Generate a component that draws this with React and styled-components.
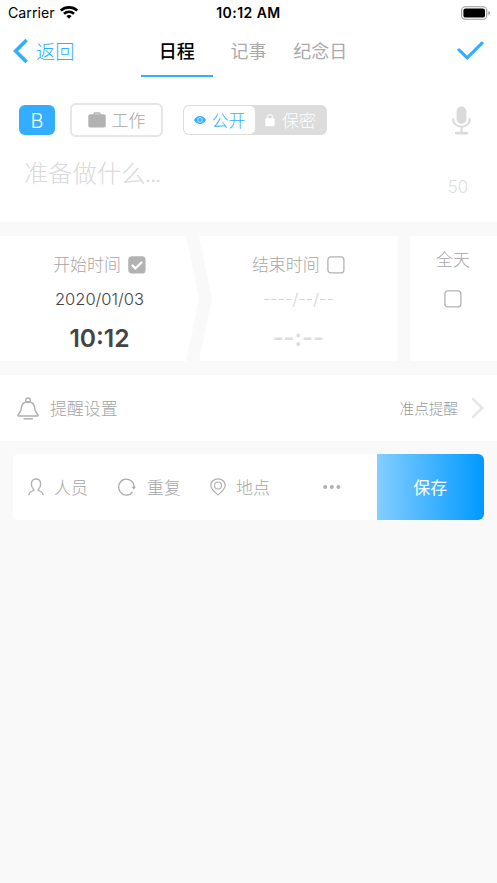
import React from 'react';
import styled, { createGlobalStyle } from 'styled-components';

const GlobalStyle = createGlobalStyle`
  * { box-sizing: border-box; }
  body { margin: 0; background: #f9f9f9; }
  button { border: 0; padding: 0; margin: 0; background: none; font: inherit; color: inherit; }
  svg { display: block; flex: none; }
`;

const Screen = styled.main`
  width: 497px;
  height: 883px;
  overflow: hidden;
  background: #f9f9f9;
  font-family: Inter, "Noto Sans CJK SC", sans-serif;
  font-weight: 300;
  font-size: 16.9px;
  color: #a6a6a6;
  white-space: nowrap;
`;

const StatusBar = styled.header`
  height: 25px;
  display: grid;
  grid-template-columns: 1fr auto 1fr;
  align-items: center;
  padding: 0 6px 0 8px;
  background: #fff;
  color: #000;
  font-size: 14.2px;
  line-height: 25px;
`;

const Carrier = styled.div`
  display: flex;
  align-items: center;
  gap: 5px;
  font-weight: 400;
`;

const Clock = styled.div`
  margin-right: 2px;
  font-size: 14px;
  font-weight: 600;
  letter-spacing: 0.45px;
`;

const Battery = styled.div`
  justify-self: end;
`;

const NavBar = styled.nav`
  height: 52px;
  display: flex;
  align-items: stretch;
  background: #fff;
`;

const Back = styled.button`
  width: 141px;
  display: flex;
  align-items: center;
  gap: 8px;
  padding: 0 0 1px 13px;
  font-size: 19.3px;
  color: #32adff;
`;

const Tab = styled.button`
  width: 71.7px;
  padding-top: 3px;
  border-bottom: 2px solid ${(p) => (p.$active ? '#32adff' : 'transparent')};
  font-size: 18px;
  line-height: 47px;
  font-weight: ${(p) => (p.$active ? 500 : 400)};
  color: ${(p) => (p.$active ? '#000' : '#aaa')};
`;

const Confirm = styled.button`
  margin-left: auto;
  padding: 0 13px 2px 0;
`;

const Compose = styled.section`
  height: 145px;
  padding: 26px 26px 0 19px;
  background: #fff;
`;

const OptionRow = styled.div`
  height: 34px;
  display: flex;
  align-items: center;
`;

const Badge = styled.div`
  width: 36px;
  height: 30px;
  border-radius: 6px;
  background: #32adff;
  color: #fff;
  font-size: 20px;
  line-height: 33px;
  text-align: center;
`;

const Category = styled.button`
  width: 93px;
  height: 34px;
  margin: 0 20px 0 15px;
  display: flex;
  align-items: center;
  justify-content: center;
  gap: 6px;
  border: 2px solid #e6e6e6;
  border-radius: 6px;
`;

const Segment = styled.div`
  width: 144px;
  height: 30px;
  padding: 1px;
  display: flex;
  border-radius: 6px;
  background: #dcdcdc;
`;

const SegmentItem = styled.button`
  width: 71px;
  display: flex;
  align-items: center;
  justify-content: center;
  gap: ${(p) => (p.$active ? 6 : 7)}px;
  border-radius: 5px;
  background: ${(p) => (p.$active ? '#fff' : 'transparent')};
  color: ${(p) => (p.$active ? '#32adff' : '#fff')};
`;

const OptionLabel = styled.span`
  padding-top: ${(p) => p.$drop || 1}px;
  line-height: 24px;
`;

const MicButton = styled.button`
  margin-left: auto;
`;

const Prompt = styled.div`
  height: 30px;
  margin: 20px 0 0 5px;
  padding-top: 1px;
  font-size: 24.3px;
  line-height: 30px;
  color: #dadada;
`;

const Ellipsis = styled.span`
  margin-left: -1px;
  letter-spacing: -1.7px;
`;

const Counter = styled.div`
  margin: -10px 3px 0 0;
  text-align: right;
  font-size: 16.7px;
  line-height: 20px;
  color: #ddd;
`;

const TimeSection = styled.section`
  height: 125px;
  margin: 14px 0;
  display: flex;
`;

const TimePanel = styled.div`
  width: ${(p) => (p.$arrow === 'out' ? 199 : 198.5)}px;
  padding-top: 16px;
  display: flex;
  flex-direction: column;
  align-items: center;
  background: #fff;
  clip-path: ${(p) =>
    p.$arrow === 'out'
      ? 'polygon(0 0, 186px 0, 100% 50%, 186px 100%, 0 100%)'
      : 'polygon(0 0, 100% 0, 100% 100%, 0 100%, 13px 50%)'};
`;

const TimeTitle = styled.div`
  height: 26px;
  display: flex;
  align-items: center;
  gap: 7px;
  line-height: 26px;
`;

const DateValue = styled.div`
  margin-top: 10px;
  font-size: 16.5px;
  line-height: 22px;
  color: ${(p) => (p.$empty ? '#d4d4d4' : '#444')};
`;

const HourValue = styled.div`
  margin-top: 11px;
  font-size: ${(p) => (p.$empty ? 23.5 : 24.6)}px;
  font-weight: 600;
  line-height: 34px;
  color: ${(p) => (p.$empty ? '#ddd' : '#444')};
`;

const AllDay = styled.div`
  width: 87px;
  margin-left: 12.5px;
  padding: 12px 1px 0 0;
  display: flex;
  flex-direction: column;
  align-items: center;
  gap: 18px;
  line-height: 24px;
  background: #fff;
`;

const Reminder = styled.section`
  height: 66px;
  padding: 0 13px 0 17px;
  display: flex;
  align-items: center;
  gap: 11px;
  background: #fff;
`;

const ReminderLabel = styled.div`
  padding-bottom: 2px;
`;

const ReminderValue = styled.div`
  margin-left: auto;
  margin-right: 2px;
  padding-bottom: 2px;
  font-size: 14.6px;
  color: #999;
`;

const ActionBar = styled.footer`
  height: 66px;
  margin: 13px 13px 0;
  display: flex;
  border-radius: 6px;
  overflow: hidden;
  background: #fff;
`;

const Action = styled.button`
  width: ${(p) => p.$width}px;
  padding-left: ${(p) => p.$inset || 0}px;
  display: flex;
  align-items: center;
  gap: ${(p) => p.$gap || 10}px;
`;

const ActionLabel = styled.span`
  padding-bottom: 1px;
`;

const Save = styled.button`
  flex: 1;
  padding: 0 1px 1px 0;
  background: linear-gradient(90deg, #84ceff, #0099ff);
  color: #fff;
  font-weight: 400;
`;

const WifiIcon = () => (
  <svg width="18" height="13" viewBox="0 0 18 13" fill="none" stroke="#000" strokeWidth="2.6">
    <path d="M.8 4.5C5.3.3 12.7.3 17.2 4.5M4 7.8c2.9-2.6 7.1-2.6 10 0" />
    <path d="M9 12.8 6.3 10q2.7-2 5.4 0Z" fill="#000" stroke="none" />
  </svg>
);

const BatteryIcon = () => (
  <svg width="30" height="14" viewBox="0 0 30 14">
    <rect x=".6" y=".7" width="25.2" height="12.6" rx="3.8" fill="none" stroke="#999" strokeWidth="1.1" />
    <rect x="2.4" y="2.4" width="21.6" height="9.2" rx="2.2" />
    <path d="M27.4 5v4c1.9-.8 1.9-3.2 0-4Z" fill="#888" />
  </svg>
);

const Checkbox = ({ checked }) => (
  <svg width="18" height="18" viewBox="0 0 18 18" fill="none">
    <rect x=".9" y=".9" width="16" height="16" rx="3" stroke="#b2b2b2" strokeWidth="1.3" fill={checked ? '#b2b2b2' : 'none'} />
    {checked && <path d="m3.8 8.8 3.7 3.6L14 6" stroke="#fff" strokeWidth="2.4" />}
  </svg>
);

const BriefcaseIcon = () => (
  <svg width="18" height="16" viewBox="0 0 18 16">
    <path d="M6 4V1.8Q6 1 6.8 1h4.4q.8 0 .8.8V4" fill="none" stroke="#b2b2b2" strokeWidth="1.4" />
    <rect x=".3" y="2.2" width="17.4" height="13.3" rx="1.8" fill="#b2b2b2" />
  </svg>
);

const EyeIcon = () => (
  <svg width="12" height="8" viewBox="0 0 12 8">
    <path d="M0 4C3-1.2 9-1.2 12 4 9 9.2 3 9.2 0 4Z" fill="#32adff" />
    <circle cx="6" cy="4" r="2.3" fill="none" stroke="#fff" strokeWidth=".75" />
  </svg>
);

const LockIcon = () => (
  <svg width="10" height="14" viewBox="0 0 10 14">
    <path d="M2.3 6V4.2a2.7 2.7 0 0 1 5.4 0V6" fill="none" stroke="#fff" strokeWidth="1" />
    <rect x=".3" y="5.2" width="9.4" height="8" rx=".8" fill="#fff" />
  </svg>
);

const MicIcon = () => (
  <svg width="19" height="29" viewBox="0 0 19 29" fill="none" stroke="#dadada" strokeWidth="2" strokeLinecap="round">
    <rect x="4.6" y=".5" width="9.8" height="17.5" rx="4.9" fill="#dadada" stroke="none" />
    <path d="M1.2 13c0 10.3 16.6 10.3 16.6 0M9.5 21v6" />
    <path d="M4.2 27.1h10.6" strokeWidth="2.6" />
  </svg>
);

const BellIcon = () => (
  <svg width="22" height="23" viewBox="0 0 22 23" fill="none" stroke="#b0b0b0" strokeWidth="1.5" strokeLinecap="round" strokeLinejoin="round">
    <circle cx="11" cy="3.3" r="2.3" />
    <path d="M11 4.8c-4.3 0-6.3 2.7-6.7 6.4-.3 3.8-2 4.9-3.1 6.5-.5.7-.2 1.2.6 1.2h18.4c.8 0 1.1-.5.6-1.2-1.1-1.6-2.8-2.7-3.1-6.5-.4-3.7-2.4-6.4-6.7-6.4Z" />
    <path d="M7 21.7h8.3" />
  </svg>
);

const PersonIcon = () => (
  <svg width="16" height="18" viewBox="0 0 16 18" fill="none" stroke="#b0b0b0" strokeWidth="1.3" strokeLinecap="round" strokeLinejoin="round">
    <path d="M1 16.7c.1-2.4 1.3-3 3.3-3.7 1.6-.5 1.8-1.2 1.1-2-1.4-1.2-2-2.8-2-5C3.4 2.8 5.2 1 8 1s4.6 1.8 4.6 5c0 2.2-.6 3.8-2 5-.7.8-.5 1.5 1.1 2 2 .7 3.2 1.3 3.3 3.7" />
  </svg>
);

const RepeatIcon = () => (
  <svg width="18" height="18" viewBox="0 0 18 18" fill="none" stroke="#aaa" strokeWidth="1.25">
    <path d="M16.1 9.4A7.7 8 0 1 0 14.6 13.8" />
    <path d="M13.4 8.7H18l-2.2 2.7Z" fill="#aaa" stroke="none" />
  </svg>
);

const PinIcon = () => (
  <svg width="16" height="18" viewBox="0 0 16 18" fill="none" stroke="#b0b0b0" strokeWidth="1.2" strokeLinejoin="round">
    <path d="M8 16.9C5.2 14.3.8 11.5.8 7.5.8 3.6 3.9.9 8 .9s7.2 2.7 7.2 6.6c0 4-4.4 6.8-7.2 9.4Z" />
    <circle cx="8" cy="7.5" r="3.5" />
  </svg>
);

export default function App() {
  return (
    <>
      <GlobalStyle />
      <Screen>
        <StatusBar>
          <Carrier>Carrier <WifiIcon /></Carrier>
          <Clock>10:12 AM</Clock>
          <Battery><BatteryIcon /></Battery>
        </StatusBar>
        <NavBar>
          <Back>
            <svg width="15" height="26" viewBox="0 0 15 26" fill="none" stroke="#32adff" strokeWidth="3.6">
              <path d="M13.6 2 2.6 13l11 11" />
            </svg>
            返回
          </Back>
          <Tab $active>日程</Tab>
          <Tab>记事</Tab>
          <Tab>纪念日</Tab>
          <Confirm aria-label="完成">
            <svg width="27" height="19" viewBox="0 0 27 19" fill="none" stroke="#32adff" strokeWidth="3.1" strokeLinecap="round">
              <path d="m2 8.8 8.2 8L25 2.2" />
            </svg>
          </Confirm>
        </NavBar>
        <Compose>
          <OptionRow>
            <Badge>B</Badge>
            <Category><BriefcaseIcon /><OptionLabel>工作</OptionLabel></Category>
            <Segment>
              <SegmentItem $active><EyeIcon /><OptionLabel $drop={2}>公开</OptionLabel></SegmentItem>
              <SegmentItem><LockIcon /><OptionLabel $drop={2}>保密</OptionLabel></SegmentItem>
            </Segment>
            <MicButton aria-label="语音"><MicIcon /></MicButton>
          </OptionRow>
          <Prompt>准备做什么<Ellipsis>...</Ellipsis></Prompt>
          <Counter>50</Counter>
        </Compose>
        <TimeSection>
          <TimePanel $arrow="out">
            <TimeTitle>开始时间 <Checkbox checked /></TimeTitle>
            <DateValue>2020/01/03</DateValue>
            <HourValue>10:12</HourValue>
          </TimePanel>
          <TimePanel $arrow="in">
            <TimeTitle>结束时间 <Checkbox /></TimeTitle>
            <DateValue $empty>----/--/--</DateValue>
            <HourValue $empty>--:--</HourValue>
          </TimePanel>
          <AllDay>全天<Checkbox /></AllDay>
        </TimeSection>
        <Reminder>
          <BellIcon />
          <ReminderLabel>提醒设置</ReminderLabel>
          <ReminderValue>准点提醒</ReminderValue>
          <svg width="13" height="22" viewBox="0 0 13 22" fill="none" stroke="#e6e6e6" strokeWidth="2.6" strokeLinecap="round">
            <path d="m2 2 9 9-9 9" />
          </svg>
        </Reminder>
        <ActionBar>
          <Action $width={105} $inset={15}><PersonIcon /><ActionLabel>人员</ActionLabel></Action>
          <Action $width={92} $gap={11}><RepeatIcon /><ActionLabel>重复</ActionLabel></Action>
          <Action $width={100}><PinIcon /><ActionLabel>地点</ActionLabel></Action>
          <Action $width={67.4} $inset={12} aria-label="更多">
            <svg width="20" height="6" viewBox="0 0 20 6" fill="#b0b0b0">
              <circle cx="3.2" cy="3" r="2" /><circle cx="9.8" cy="3" r="2" /><circle cx="16.4" cy="3" r="2" />
            </svg>
          </Action>
          <Save>保存</Save>
        </ActionBar>
      </Screen>
    </>
  );
}
